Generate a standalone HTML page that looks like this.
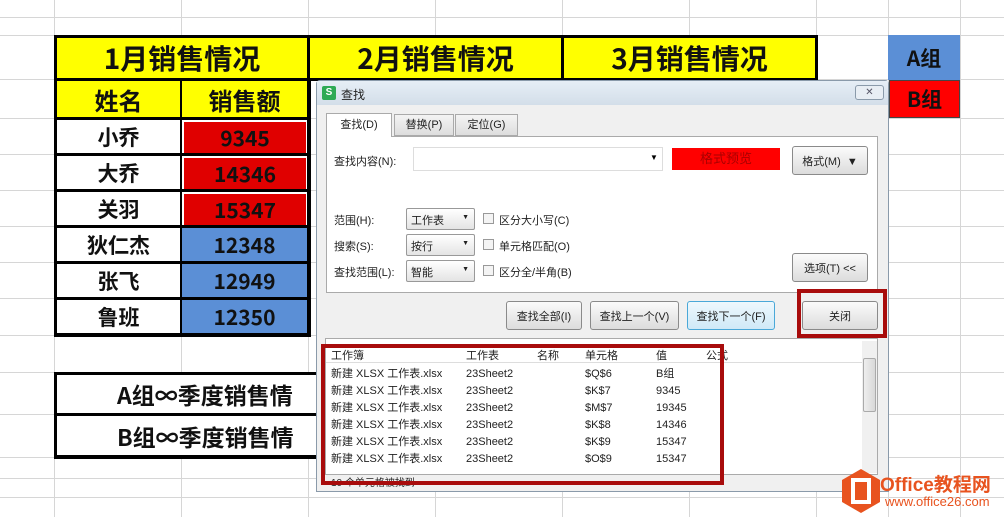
<!DOCTYPE html><html><head><meta charset="utf-8"><style>
*{margin:0;padding:0;box-sizing:border-box}
body{width:1004px;height:517px;overflow:hidden;background:#fff;position:relative;font-family:"Liberation Sans","Noto Sans CJK SC",sans-serif}
.a{position:absolute}
.gv{position:absolute;top:0;height:517px;width:1px;background:#d6d6d6}
.gh{position:absolute;left:0;width:1004px;height:1px;background:#d6d6d6}
.c{position:absolute;display:flex;align-items:center;justify-content:center;font-weight:bold;color:#111;font-family:"WenQuanYi Zen Hei","Noto Sans CJK SC",sans-serif}
.d{font-family:"Liberation Sans","Noto Sans CJK SC",sans-serif;font-size:11px;color:#222}
.btn{position:absolute;border:1px solid #8a8a8a;border-radius:3px;background:linear-gradient(#fbfbfb,#dcdcdc);display:flex;align-items:center;justify-content:center;font-size:11px;color:#222}
.sel{position:absolute;border:1px solid #999;border-radius:2px;background:linear-gradient(#fff,#e4e4e4);font-size:11px;padding:3px 4px;color:#222}
.sel:after{content:"▼";position:absolute;right:5px;top:5px;font-size:7px}
.cb{position:absolute;width:11px;height:11px;border:1px solid #999;background:#f4f4f4}
</style></head><body>
<div class="gv" style="left:54px"></div><div class="gv" style="left:181px"></div><div class="gv" style="left:308px"></div><div class="gv" style="left:435px"></div><div class="gv" style="left:562px"></div><div class="gv" style="left:689px"></div><div class="gv" style="left:816px"></div><div class="gv" style="left:888px"></div><div class="gv" style="left:960px"></div>
<div class="gh" style="top:17px"></div><div class="gh" style="top:35px"></div><div class="gh" style="top:79px"></div><div class="gh" style="top:118px"></div><div class="gh" style="top:154px"></div><div class="gh" style="top:190px"></div><div class="gh" style="top:226px"></div><div class="gh" style="top:262px"></div><div class="gh" style="top:298px"></div><div class="gh" style="top:335px"></div><div class="gh" style="top:372px"></div><div class="gh" style="top:414px"></div><div class="gh" style="top:457px"></div><div class="gh" style="top:478px"></div><div class="gh" style="top:497px"></div>
<!-- header -->
<div class="a" style="left:54px;top:35px;width:764px;height:46px;background:#000"></div>
<div class="c" style="left:57px;top:38px;width:250px;height:40px;background:#ff0;font-size:28px">1月销售情况</div>
<div class="c" style="left:310px;top:38px;width:251px;height:40px;background:#ff0;font-size:28px">2月销售情况</div>
<div class="c" style="left:564px;top:38px;width:251px;height:40px;background:#ff0;font-size:28px">3月销售情况</div>
<div class="a" style="left:54px;top:79px;width:257px;height:258px;background:#000"></div>
<div class="c" style="left:57px;top:81px;width:123px;height:36px;background:#ff0;font-size:24px">姓名</div>
<div class="c" style="left:182px;top:81px;width:125px;height:36px;background:#ff0;font-size:24px">销售额</div>
<div class="c" style="left:57px;top:120px;width:123px;height:33px;background:#fff;font-size:21px">小乔</div>
<div class="c" style="left:57px;top:156px;width:123px;height:33px;background:#fff;font-size:21px">大乔</div>
<div class="c" style="left:57px;top:192px;width:123px;height:33px;background:#fff;font-size:21px">关羽</div>
<div class="c" style="left:57px;top:228px;width:123px;height:33px;background:#fff;font-size:21px">狄仁杰</div>
<div class="c" style="left:57px;top:264px;width:123px;height:33px;background:#fff;font-size:21px">张飞</div>
<div class="c" style="left:57px;top:300px;width:123px;height:33px;background:#fff;font-size:21px">鲁班</div>
<div class="a" style="left:182px;top:120px;width:125px;height:33px;background:#fff"></div>
<div class="c" style="left:184px;top:122px;width:122px;height:31px;background:#e00000;font-size:21px">9345</div>
<div class="a" style="left:182px;top:156px;width:125px;height:33px;background:#fff"></div>
<div class="c" style="left:184px;top:158px;width:122px;height:31px;background:#e00000;font-size:21px">14346</div>
<div class="a" style="left:182px;top:192px;width:125px;height:33px;background:#fff"></div>
<div class="c" style="left:184px;top:194px;width:122px;height:31px;background:#e00000;font-size:21px">15347</div>
<div class="c" style="left:182px;top:228px;width:125px;height:33px;background:#5b8fd6;font-size:21px">12348</div>
<div class="c" style="left:182px;top:264px;width:125px;height:33px;background:#5b8fd6;font-size:21px">12949</div>
<div class="c" style="left:182px;top:300px;width:125px;height:33px;background:#5b8fd6;font-size:21px">12350</div>
<div class="c" style="left:888px;top:35px;width:72px;height:45px;background:#5b8fd6;font-size:21px">A组</div>
<div class="c" style="left:889px;top:80px;width:71px;height:38px;background:#f00;border:1px solid #444;font-size:21px">B组</div>
<!-- bottom table -->
<div class="a" style="left:54px;top:372px;width:300px;height:87px;background:#000"></div>
<div class="c" style="left:57px;top:375px;width:300px;height:38px;background:#fff;font-size:23px;justify-content:flex-start;padding-left:60px">A组∞季度销售情</div>
<div class="c" style="left:57px;top:416px;width:300px;height:39px;background:#fff;font-size:23px;justify-content:flex-start;padding-left:60px">B组∞季度销售情</div>
<!-- dialog -->
<div class="a" style="left:316px;top:80px;width:573px;height:412px;background:#f0f0f0;border:1px solid #8a9aaa;border-radius:4px 4px 0 0"></div>
<div class="a" style="left:317px;top:81px;width:571px;height:24px;background:linear-gradient(#e6eef6,#d3dee9)"></div>
<div class="a" style="left:322px;top:86px;width:14px;height:14px;background:#2eaa55;border-radius:2px;color:#fff;font-size:10px;font-weight:bold;text-align:center;line-height:14px">S</div>
<div class="a d" style="left:341px;top:86px;font-size:12px">查找</div>
<div class="a" style="left:855px;top:85px;width:29px;height:15px;border:1px solid #8a9aaa;border-radius:3px;background:#e8eef4;font-size:10px;text-align:center;line-height:13px;color:#556">✕</div>
<div class="a" style="left:326px;top:136px;width:552px;height:157px;background:#fff;border:1px solid #aaa"></div>
<div class="a d" style="left:326px;top:113px;width:66px;height:24px;background:#fff;border:1px solid #aaa;border-bottom:none;text-align:center;line-height:22px">查找(D)</div>
<div class="a d" style="left:394px;top:114px;width:60px;height:22px;background:linear-gradient(#f4f4f4,#ddd);border:1px solid #aaa;text-align:center;line-height:20px">替换(P)</div>
<div class="a d" style="left:455px;top:114px;width:63px;height:22px;background:linear-gradient(#f4f4f4,#ddd);border:1px solid #aaa;text-align:center;line-height:20px">定位(G)</div>
<div class="a d" style="left:334px;top:153px">查找内容(N):</div>
<div class="a" style="left:413px;top:147px;width:250px;height:24px;border:1px solid #ddd;background:#fff"></div>
<div class="a" style="left:650px;top:153px;font-size:8px">▼</div>
<div class="a" style="left:672px;top:148px;width:108px;height:22px;background:#f00;color:#a00;font-size:13px;text-align:center;line-height:22px">格式预览</div>
<div class="btn" style="left:792px;top:146px;width:76px;height:29px">格式(M)&nbsp;&nbsp;▼</div>
<div class="a d" style="left:334px;top:212px">范围(H):</div>
<div class="a d" style="left:334px;top:238px">搜索(S):</div>
<div class="a d" style="left:334px;top:264px">查找范围(L):</div>
<div class="sel" style="left:406px;top:208px;width:69px;height:22px">工作表</div>
<div class="sel" style="left:406px;top:234px;width:69px;height:22px">按行</div>
<div class="sel" style="left:406px;top:260px;width:69px;height:22px">智能</div>
<div class="cb" style="left:483px;top:213px"></div><div class="a d" style="left:499px;top:212px">区分大小写(C)</div>
<div class="cb" style="left:483px;top:239px"></div><div class="a d" style="left:499px;top:238px">单元格匹配(O)</div>
<div class="cb" style="left:483px;top:265px"></div><div class="a d" style="left:499px;top:264px">区分全/半角(B)</div>
<div class="btn" style="left:792px;top:253px;width:76px;height:29px">选项(T) &lt;&lt;</div>
<div class="btn" style="left:506px;top:301px;width:76px;height:29px">查找全部(I)</div>
<div class="btn" style="left:590px;top:301px;width:89px;height:29px">查找上一个(V)</div>
<div class="btn" style="left:687px;top:301px;width:88px;height:29px;border-color:#4aa8d8;background:linear-gradient(#eef8fd,#cfe9f7)">查找下一个(F)</div>
<div class="btn" style="left:802px;top:301px;width:76px;height:29px">关闭</div>
<div class="a" style="left:797px;top:289px;width:90px;height:49px;border:4px solid #a80c0c"></div>
<!-- list -->
<div class="a" style="left:325px;top:338px;width:553px;height:137px;background:#fff;border:1px solid #aaa"></div>
<div class="a" style="left:326px;top:346px;width:537px;height:17px;border-bottom:1px solid #ddd"></div>
<div class="a d" style="left:331px;top:347px">工作簿</div><div class="a d" style="left:466px;top:347px">工作表</div><div class="a d" style="left:537px;top:347px">名称</div><div class="a d" style="left:585px;top:347px">单元格</div><div class="a d" style="left:656px;top:347px">值</div><div class="a d" style="left:706px;top:347px">公式</div>
<div class="a" style="left:862px;top:341px;width:15px;height:132px;background:#f0f0f0"></div>
<div class="a" style="left:863px;top:358px;width:13px;height:54px;background:linear-gradient(90deg,#eee,#d8d8d8);border:1px solid #aaa;border-radius:2px"></div>
<div class="a d" style="left:331px;top:366px;line-height:17px;white-space:pre">新建 XLSX 工作表.xlsx
新建 XLSX 工作表.xlsx
新建 XLSX 工作表.xlsx
新建 XLSX 工作表.xlsx
新建 XLSX 工作表.xlsx
新建 XLSX 工作表.xlsx</div>
<div class="a d" style="left:466px;top:366px;line-height:17px;white-space:pre">23Sheet2
23Sheet2
23Sheet2
23Sheet2
23Sheet2
23Sheet2</div>
<div class="a d" style="left:585px;top:366px;line-height:17px;white-space:pre">$Q$6
$K$7
$M$7
$K$8
$K$9
$O$9</div>
<div class="a d" style="left:656px;top:366px;line-height:17px;white-space:pre">B组
9345
19345
14346
15347
15347</div>
<div class="a d" style="left:331px;top:474px;font-size:10px">10 个单元格被找到</div>
<div class="a" style="left:321px;top:344px;width:403px;height:141px;border:4px solid #a80c0c"></div>
<!-- logo -->
<svg class="a" style="left:840px;top:468px" width="42" height="46" viewBox="0 0 42 46"><polygon points="21,1 40,12 40,34 21,45 2,34 2,12" fill="#e8531f"/><rect x="13" y="12" width="16" height="22" fill="none" stroke="#fff" stroke-width="4"/></svg>
<div class="a" style="left:880px;top:470px;font-size:19px;font-weight:bold;color:#e8531f">Office教程网</div>
<div class="a" style="left:885px;top:494px;font-size:13px;color:#e8531f">www.office26.com</div>
</body></html>
